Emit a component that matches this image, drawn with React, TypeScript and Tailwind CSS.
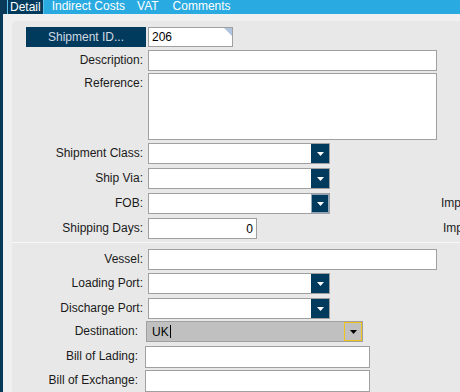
import React from "react";

const font = { fontFamily: '"Liberation Sans", Arial, sans-serif' };

function Arrow({ color = "#ffffff" }: { color?: string }) {
  return (
    <svg width="7" height="4" viewBox="0 0 7 4">
      <path d="M0 0 H7 L3.5 4 Z" fill={color} />
    </svg>
  );
}

function Select({ w, focus }: { w: number; focus?: boolean }) {
  return (
    <div
      className="flex h-[21px] border border-[#a0a0a0] bg-white"
      style={{ width: w }}
    >
      <div className="flex-1" />
      <div
        className={
          "flex h-full w-[18px] items-center justify-center bg-[#003a5c] " +
          (focus ? "border border-[#8fa6bd]" : "")
        }
      >
        <Arrow />
      </div>
    </div>
  );
}

function Label({ text, w = 131 }: { text: string; w?: number }) {
  return (
    <div
      className="shrink-0 text-right text-[12px] leading-[21px] text-[#1a1a1a]"
      style={{ width: w }}
    >
      {text}
    </div>
  );
}

export default function App() {
  return (
    <div
      className="relative h-[392px] w-[460px] overflow-hidden bg-[#f0f0f0]"
      style={font}
    >
      {/* tab bar */}
      <div className="flex h-[14px] w-full items-stretch bg-[#29abe2] text-[12px] text-white">
        <div className="w-[7px] bg-[#0a3a5a]" />
        <div className="flex items-center border-x border-[#5fc0ea] bg-[#003a5c] px-[2px] leading-[14px]">
          Detail
        </div>
        <div className="ml-[8px] leading-[12px]">Indirect Costs</div>
        <div className="ml-[12px] leading-[12px]">VAT</div>
        <div className="ml-[14px] leading-[12px]">Comments</div>
      </div>

      <div className="flex h-[378px]">
        <div className="w-[3px] shrink-0 bg-[#0a3a5a]" />
        <div className="w-[9px] shrink-0 bg-[#f0f0f0]" />
        <div className="flex flex-1 flex-col pt-[7px]">
          {/* top panel */}
          <div className="flex h-[223px] flex-col rounded-tl-[4px] bg-[#e8e8e8] pt-[6px]">
            {/* shipment id */}
            <div className="flex h-[20px] items-stretch">
              <div className="ml-[14px] flex w-[120px] items-center justify-center bg-[#003a5c] text-[12px] text-[#d4dbe2]">
                Shipment ID...
              </div>
              <div className="relative ml-[2px] flex w-[85px] items-center border border-[#a0a0a0] bg-white pl-[3px] text-[12px] text-black">
                206
                <svg
                  className="absolute right-0 top-0"
                  width="8"
                  height="8"
                  viewBox="0 0 8 8"
                >
                  <path d="M0 0 H8 V8 Z" fill="#b0c4de" />
                </svg>
              </div>
            </div>
            {/* description */}
            <div className="mt-[3px] flex">
              <Label text="Description:" />
              <div className="ml-[5px] h-[21px] w-[289px] border border-[#a0a0a0] bg-white" />
            </div>
            {/* reference */}
            <div className="mt-[2px] flex">
              <Label text="Reference:" />
              <div className="ml-[5px] h-[67px] w-[289px] border border-[#a0a0a0] bg-white" />
            </div>
            <div className="mt-[3px] flex">
              <Label text="Shipment Class:" />
              <div className="ml-[5px]">
                <Select w={182} />
              </div>
            </div>
            <div className="mt-[4px] flex">
              <Label text="Ship Via:" />
              <div className="ml-[5px]">
                <Select w={182} />
              </div>
            </div>
            <div className="mt-[4px] flex">
              <Label text="FOB:" />
              <div className="ml-[5px]">
                <Select w={182} focus />
              </div>
              <div className="ml-[111px] whitespace-nowrap text-[12px] leading-[21px] text-[#1a1a1a]">
                Imp
              </div>
            </div>
            <div className="mt-[4px] flex">
              <Label text="Shipping Days:" />
              <div className="ml-[5px] flex h-[21px] w-[109px] items-center justify-end border border-[#a0a0a0] bg-white pr-[3px] text-[12px] text-black">
                0
              </div>
              <div className="ml-[186px] whitespace-nowrap text-[12px] leading-[21px] text-[#1a1a1a]">
                Imp
              </div>
            </div>
          </div>
          <div className="h-[1px] bg-[#f8f8f8]" />
          {/* bottom panel */}
          <div className="flex flex-1 flex-col bg-[#e8e8e8] pt-[6px]">
            <div className="flex">
              <Label text="Vessel:" />
              <div className="ml-[5px] h-[21px] w-[289px] border border-[#a0a0a0] bg-white" />
            </div>
            <div className="mt-[3px] flex">
              <Label text="Loading Port:" />
              <div className="ml-[5px]">
                <Select w={182} />
              </div>
            </div>
            <div className="mt-[4px] flex">
              <Label text="Discharge Port:" />
              <div className="ml-[5px]">
                <Select w={182} />
              </div>
            </div>
            <div className="mt-[2px] flex">
              <Label text="Destination:" w={126} />
              <div className="ml-[8px] flex h-[21px] w-[217px] items-center border border-[#a0a0a0] bg-[#c0c0c0]">
                <div className="flex flex-1 items-center pl-[5px] text-[12px] text-black">
                  UK
                  <span className="ml-[1px] inline-block h-[13px] w-[1px] bg-black" />
                </div>
                <div className="flex h-[19px] w-[18px] items-center justify-center border border-[#f0c419]">
                  <Arrow color="#000000" />
                </div>
              </div>
            </div>
            <div className="mt-[4px] flex">
              <Label text="Bill of Lading:" w={126} />
              <div className="ml-[7px] h-[22px] w-[225px] border border-[#a0a0a0] bg-white" />
            </div>
            <div className="mt-[2px] flex">
              <Label text="Bill of Exchange:" w={126} />
              <div className="ml-[7px] h-[22px] w-[225px] border border-[#a0a0a0] bg-white" />
            </div>
          </div>
        </div>
      </div>
    </div>
  );
}
